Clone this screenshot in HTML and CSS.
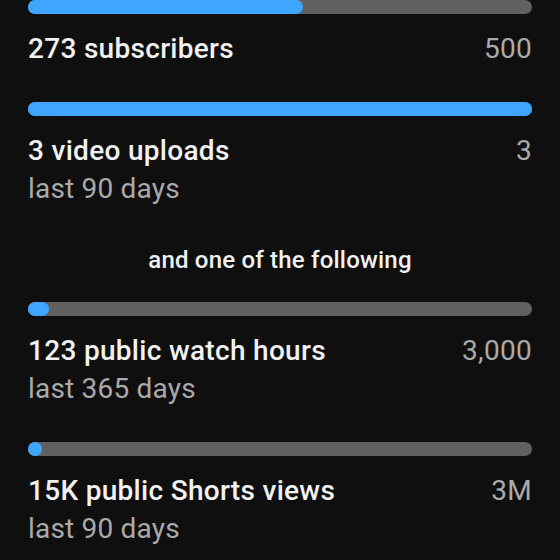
FILE: index.html
```html
<!DOCTYPE html>
<html lang="en">
<head>
    <meta charset="UTF-8">
    <meta name="viewport" content="width=device-width, initial-scale=1.0">
    <title>Eligibility</title>
    <link rel="stylesheet" href="styles.css">
</head>
<body>
    <main class="goals">
        <div class="goal">
            <div class="bar"><div class="bar-fill" style="width: 54.6%"></div></div>
            <div class="goal-row">
                <span class="goal-title">273 subscribers</span>
                <span class="goal-target">500</span>
            </div>
        </div>

        <div class="goal">
            <div class="bar"><div class="bar-fill" style="width: 100%"></div></div>
            <div class="goal-row">
                <span class="goal-title">3 video uploads</span>
                <span class="goal-target">3</span>
            </div>
            <p class="goal-period">last 90 days</p>
        </div>

        <p class="note">and one of the following</p>

        <div class="goal">
            <div class="bar"><div class="bar-fill" style="width: 4.1%"></div></div>
            <div class="goal-row">
                <span class="goal-title">123 public watch hours</span>
                <span class="goal-target">3,000</span>
            </div>
            <p class="goal-period">last 365 days</p>
        </div>

        <div class="goal">
            <div class="bar"><div class="bar-fill" style="width: 0.5%"></div></div>
            <div class="goal-row">
                <span class="goal-title">15K public Shorts views</span>
                <span class="goal-target">3M</span>
            </div>
            <p class="goal-period">last 90 days</p>
        </div>
    </main>
</body>
</html>
```

FILE: styles.css
```css
body {
    font-family: Roboto, "Noto Sans", Arial, sans-serif;
    margin: 0;
    padding: 0;
    background-color: #0f0f0f;
    color: #f1f1f1;
    overflow: hidden;
}

.goals {
    padding: 0 28px;
}

.goal + .goal {
    margin-top: 34px;
}

.bar {
    height: 14px;
    border-radius: 7px;
    background-color: #606060;
}

.bar-fill {
    height: 100%;
    min-width: 14px;
    border-radius: 7px;
    background-color: #3ea6ff;
}

.goal-row {
    display: flex;
    justify-content: space-between;
    margin-top: 16px;
    font-size: 28px;
    line-height: 38px;
    letter-spacing: 0.3px;
}

.goal-title {
    font-weight: 500;
}

.goal-target {
    color: #aaaaaa;
}

.goal-period {
    margin: 0;
    font-size: 28px;
    line-height: 38px;
    letter-spacing: 0.2px;
    color: #aaaaaa;
}

.note {
    margin: 38px 0 0;
    font-size: 24px;
    line-height: 28px;
    font-weight: 500;
    letter-spacing: 0.2px;
    text-align: center;
}

.note + .goal {
    margin-top: 28px;
}
```
